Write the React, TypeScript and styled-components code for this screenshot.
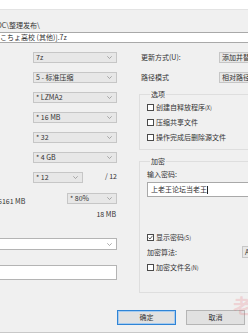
import React from 'react';
import styled, { createGlobalStyle } from 'styled-components';

const GlobalStyle = createGlobalStyle`
  html, body {
    margin: 0;
    padding: 0;
    background: #f0f0f0;
  }
  body {
    font-family: "Noto Sans CJK SC", "Noto Sans", sans-serif;
  }
`;

const Dialog = styled.div`
  position: relative;
  width: 248px;
  height: 333px;
  box-sizing: border-box;
  overflow: hidden;
  background: #f0f0f0;
  border-bottom: 1px solid #c8c8c8;
  color: #333;
  font-size: 7px;
  line-height: 9px;
  display: flex;
  flex-direction: column;
`;

const TopStrip = styled.div`
  height: 10px;
  flex-shrink: 0;
  background: #fff;
  border-bottom: 1px solid #e3e3e3;
  box-sizing: border-box;
`;

const PathLine = styled.div`
  height: 22px;
  flex-shrink: 0;
  box-sizing: border-box;
  padding-top: 11px;
  white-space: nowrap;
  margin-left: -3px;
`;

const ArchiveInput = styled.div`
  height: 11px;
  flex-shrink: 0;
  box-sizing: border-box;
  background: #fff;
  border: 1px solid #a9a9a9;
  border-left: none;
  margin-right: -10px;
  white-space: nowrap;
`;

const Body = styled.div`
  display: flex;
  padding-top: 9px;
`;

const LeftCol = styled.div`
  width: 117px;
  flex-shrink: 0;
  display: flex;
  flex-direction: column;
`;

const RightCol = styled.div`
  flex: 1;
  margin-left: 7px;
  margin-right: -40px;
  padding-left: 15px;
  display: flex;
  flex-direction: column;
`;

const ComboRow = styled.div<{ $mt?: number; $pl?: number }>`
  height: 11px;
  margin-top: ${p => p.$mt ?? 0}px;
  padding-left: ${p => p.$pl ?? 0}px;
  display: flex;
  align-items: flex-start;
  justify-content: flex-end;
  white-space: nowrap;
`;

const Combo = styled.div<{ $w: number; $h?: number; $white?: boolean }>`
  width: ${p => p.$w}px;
  height: ${p => p.$h ?? 11}px;
  flex-shrink: 0;
  box-sizing: border-box;
  background: ${p => (p.$white ? '#ffffff' : '#e7e7e7')};
  border: 1px solid ${p => (p.$white ? '#b4b4b4' : '#c6c6c6')};
  display: flex;
  align-items: center;
  justify-content: space-between;
  padding: 0 4px 0 2px;
  white-space: nowrap;
  overflow: hidden;
`;

const WideCombo = styled(Combo)`
  border-left: none;
`;

const Spacer = styled.div`
  flex: 1;
`;

const SideText = styled.span<{ $pt?: number }>`
  padding-top: ${p => p.$pt ?? 0}px;
  white-space: nowrap;
`;

const CutText = styled(SideText)`
  margin-left: -2px;
`;

const RightText = styled.div<{ $mt?: number }>`
  margin-top: ${p => p.$mt ?? 0}px;
  height: 9px;
  text-align: right;
  padding-right: 1px;
`;

const ParamInput = styled.div`
  margin-top: 16px;
  height: 15px;
  box-sizing: border-box;
  background: #fff;
  border: 1px solid #b4b4b4;
  border-left: none;
`;

const FieldRow = styled.div<{ $mt?: number; $h?: number }>`
  height: ${p => p.$h ?? 11}px;
  margin-top: ${p => p.$mt ?? 0}px;
  display: flex;
  align-items: center;
  white-space: nowrap;
`;

const FieldLabel = styled.span<{ $w: number; $pl?: number }>`
  width: ${p => p.$w}px;
  flex-shrink: 0;
  padding-left: ${p => p.$pl ?? 2}px;
  box-sizing: border-box;
`;

const Group = styled.fieldset<{ $mt: number; $pb: number }>`
  margin: ${p => p.$mt}px 0 0 0;
  padding: 0 0 ${p => p.$pb}px 7px;
  border: 1px solid #dedede;
  border-right: none;
  min-width: 0;
`;

const Legend = styled.legend`
  padding: 0 1px;
  margin-left: 3px;
  font-size: 7px;
  line-height: 9px;
`;

const CheckRow = styled.label<{ $mt?: number }>`
  display: flex;
  align-items: center;
  height: 9px;
  margin-top: ${p => p.$mt ?? 0}px;
  white-space: nowrap;
  gap: 2px;
`;

const Box = styled.span`
  width: 7px;
  height: 7px;
  box-sizing: border-box;
  border: 1px solid #4a4a4a;
  background: #fff;
  display: inline-flex;
  align-items: center;
  justify-content: center;
  flex-shrink: 0;
`;

const Small = styled.span`
  font-size: 5.5px;
`;

const PlainLine = styled.div<{ $mt?: number }>`
  height: 9px;
  margin-top: ${p => p.$mt ?? 0}px;
  white-space: nowrap;
`;

const PasswordInput = styled.div`
  margin-top: 3px;
  height: 15px;
  box-sizing: border-box;
  background: #fff;
  border: 1px solid #a9a9a9;
  border-right: none;
  padding: 2px 0 0 3px;
  display: flex;
  align-items: flex-start;
  white-space: nowrap;
`;

const Caret = styled.span`
  display: inline-block;
  width: 1px;
  height: 8px;
  margin-top: 1px;
  background: #222;
`;

const Footer = styled.div`
  margin-top: auto;
  display: flex;
  gap: 10px;
  padding: 0 0 7px 117px;
`;

const Button = styled.div<{ $primary?: boolean }>`
  width: 59px;
  height: 15px;
  flex-shrink: 0;
  box-sizing: border-box;
  background: #e1e1e1;
  border: 1px solid ${p => (p.$primary ? '#2f84d6' : '#b5b5b5')};
  box-shadow: ${p => (p.$primary ? 'inset 0 0 0 1px #a6cbef' : 'none')};
  display: flex;
  align-items: center;
  justify-content: center;
`;

const Watermark = styled.div`
  position: absolute;
  right: -5px;
  bottom: 15px;
  color: rgba(232, 90, 100, 0.2);
  font-size: 20px;
  line-height: 22px;
  font-weight: bold;
  pointer-events: none;
`;

const Chevron = () => (
  <svg width="5" height="3" viewBox="0 0 5 3">
    <path d="M0.3 0.3 L2.5 2.5 L4.7 0.3" fill="none" stroke="#8a8a8a" strokeWidth="0.7" />
  </svg>
);

const Tick = () => (
  <svg width="5" height="5" viewBox="0 0 5 5">
    <path d="M0.6 2.6 L2 4 L4.5 0.8" fill="none" stroke="#333" strokeWidth="0.8" />
  </svg>
);

const Check = ({ checked, children, mt }: { checked?: boolean; children: React.ReactNode; mt?: number }) => (
  <CheckRow $mt={mt}>
    <Box>{checked && <Tick />}</Box>
    <span>{children}</span>
  </CheckRow>
);

const leftCombos = ['7z', '5 - 标准压缩', '* LZMA2', '* 16 MB', '* 32', '* 4 GB'];

export default function App() {
  return (
    <Dialog>
      <GlobalStyle />
      <TopStrip />
      <PathLine>DC\整理发布\</PathLine>
      <ArchiveInput>こちょ高校 (其他)].7z</ArchiveInput>
      <Body>
        <LeftCol>
          {leftCombos.map((text, i) => (
            <ComboRow key={text} $mt={i === 0 ? 0 : 9}>
              <Combo $w={84}>
                <span>{text}</span>
                <Chevron />
              </Combo>
            </ComboRow>
          ))}
          <ComboRow $mt={9} $pl={33}>
            <Combo $w={50}>
              <span>* 12</span>
              <Chevron />
            </Combo>
            <Spacer />
            <SideText>/ 12</SideText>
          </ComboRow>
          <ComboRow $mt={10}>
            <CutText $pt={4}>6161 MB</CutText>
            <Spacer />
            <Combo $w={50}>
              <span>* 80%</span>
              <Chevron />
            </Combo>
          </ComboRow>
          <RightText $mt={6}>18 MB</RightText>
          <ComboRow $mt={19}>
            <WideCombo $w={117} $h={12} $white>
              <span />
              <Chevron />
            </WideCombo>
          </ComboRow>
          <ParamInput />
        </LeftCol>

        <RightCol>
          <FieldRow>
            <FieldLabel $w={80}>更新方式(U):</FieldLabel>
            <Combo $w={60}>
              <span>添加并替换文件</span>
            </Combo>
          </FieldRow>
          <FieldRow $mt={9}>
            <FieldLabel $w={80}>路径模式</FieldLabel>
            <Combo $w={60}>
              <span>相对路径</span>
            </Combo>
          </FieldRow>

          <Group $mt={7} $pb={7}>
            <Legend>选项</Legend>
            <Check mt={4}>创建自释放程序<Small>(X)</Small></Check>
            <Check mt={6}>压缩共享文件</Check>
            <Check mt={6}>操作完成后删除源文件</Check>
          </Group>

          <Group $mt={7} $pb={20}>
            <Legend>加密</Legend>
            <PlainLine $mt={4}>输入密码:</PlainLine>
            <PasswordInput>
              <span>上老王论坛当老王</span>
              <Caret />
            </PasswordInput>
            <Check checked mt={36}>显示密码<Small>(S)</Small></Check>
            <FieldRow $mt={4} $h={12}>
              <FieldLabel $w={95} $pl={0}>加密算法:</FieldLabel>
              <Combo $w={40} $h={12}>
                <span>AES-256</span>
              </Combo>
            </FieldRow>
            <Check mt={5}>加密文件名<Small>(N)</Small></Check>
          </Group>
        </RightCol>
      </Body>

      <Footer>
        <Button $primary>确定</Button>
        <Button>取消</Button>
      </Footer>
      <Watermark>老</Watermark>
    </Dialog>
  );
}
